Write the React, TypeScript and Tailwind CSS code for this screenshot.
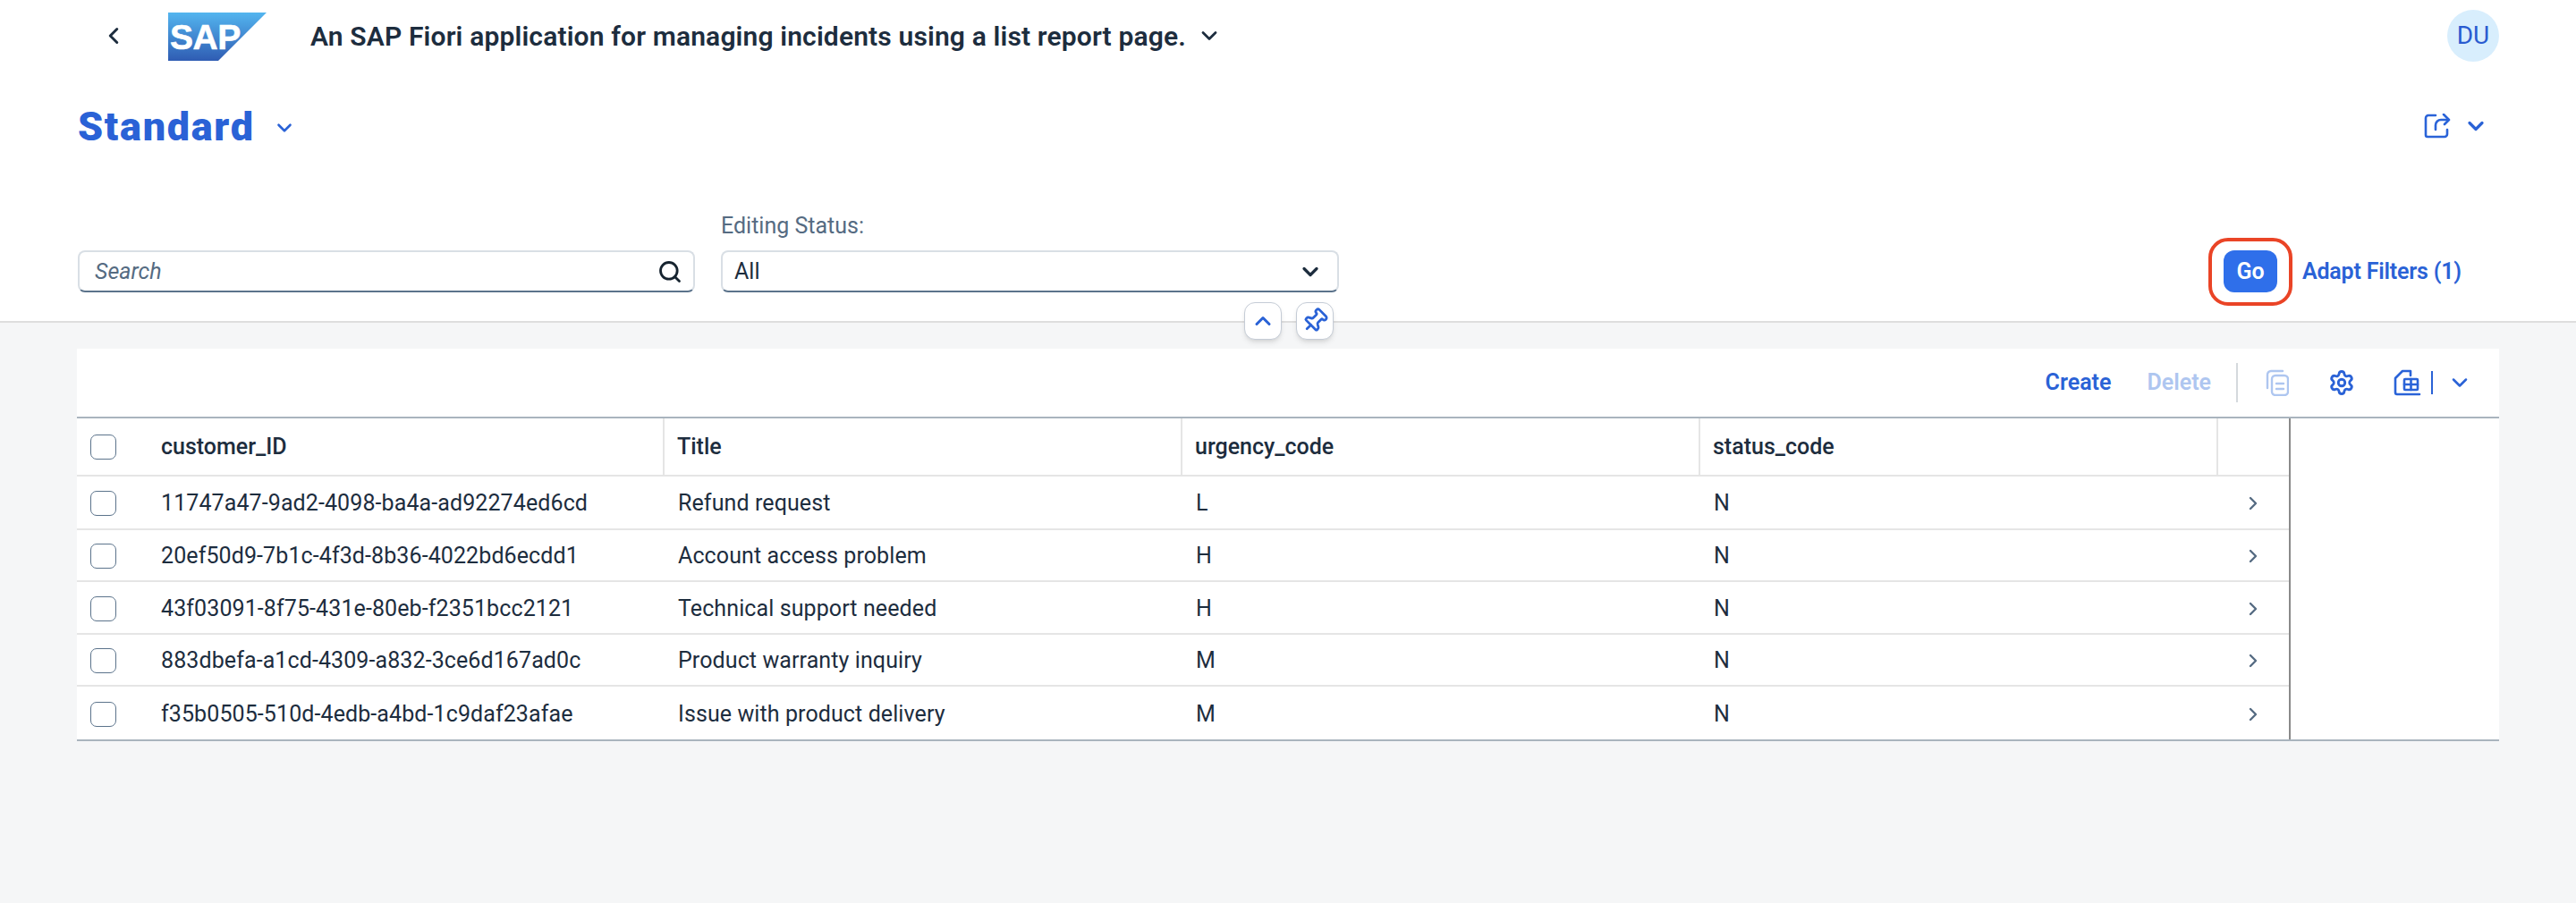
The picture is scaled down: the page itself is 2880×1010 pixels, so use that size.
import { Settings, Search, ChevronDown, ChevronLeft, ChevronRight, ChevronUp, Pin } from "lucide-react"

const FONT = "font-['Roboto',sans-serif]"

const rows = [
    { id: "11747a47-9ad2-4098-ba4a-ad92274ed6cd", title: "Refund request", urgency: "L", h: "h-[60px]" },
    { id: "20ef50d9-7b1c-4f3d-8b36-4022bd6ecdd1", title: "Account access problem", urgency: "H", h: "h-[58px]" },
    { id: "43f03091-8f75-431e-80eb-f2351bcc2121", title: "Technical support needed", urgency: "H", h: "h-[59px]" },
    { id: "883dbefa-a1cd-4309-a832-3ce6d167ad0c", title: "Product warranty inquiry", urgency: "M", h: "h-[58px]" },
    { id: "f35b0505-510d-4edb-a4bd-1c9daf23afae", title: "Issue with product delivery", urgency: "M", h: "h-[59px]" },
]

const SapLogo = () => (
    <svg width="110" height="54" viewBox="0 0 110 54">
        <defs>
            <linearGradient id="sapGrad" x1="0" y1="0" x2="0" y2="1">
                <stop offset="0" stopColor="#53b5ef" />
                <stop offset="1" stopColor="#2f5cb3" />
            </linearGradient>
        </defs>
        <polygon points="0,0 110,0 56,54 0,54" fill="url(#sapGrad)" />
        <text x="2" y="41" fontFamily="Liberation Sans" fontWeight="700" fontSize="39" letterSpacing="-0.5" fill="#fff" stroke="#fff" strokeWidth="0.6">SAP</text>
    </svg>
)

const ShareIcon = () => (
    <svg width="30" height="28" viewBox="0 0 30 28" fill="none" stroke="#2a63d8" strokeWidth="2.6" strokeLinecap="round" strokeLinejoin="round">
        <path d="M13 2H5a3 3 0 0 0-3 3v19a2 2 0 0 0 2 2h19a3 3 0 0 0 3-3v-5" />
        <path d="M13 18v-5a6 6 0 0 1 6-6h8" />
        <path d="M22 1l6 6-5 5" />
    </svg>
)

const CopyIcon = () => (
    <svg width="26" height="30" viewBox="0 0 26 30" fill="none" stroke="#aec6f0" strokeWidth="2.4" strokeLinecap="round" strokeLinejoin="round">
        <path d="M19 2H6a4 4 0 0 0-4 4v15" />
        <rect x="7" y="7" width="18" height="22" rx="4" />
        <path d="M12 16h8M12 22h8" />
    </svg>
)

const ExportIcon = () => (
    <svg width="32" height="30" viewBox="0 0 32 30" fill="none" stroke="#2a63d8" strokeWidth="2.6" strokeLinejoin="round" strokeLinecap="round">
        <path d="M19 7V2H10L2 10v16a2 2 0 0 0 2 2h25" />
        <rect x="12" y="11" width="15" height="12" rx="1" />
        <path d="M19.500 11v12M12 17h15" />
    </svg>
)

const Checkbox = () => (
    <div className="w-[29px] h-[28px] rounded-[7px] border border-[#5b738b] bg-white" />
)

const App = () => {
    return (
        <div className={`${FONT} w-[2880px] h-[1010px] bg-[#f5f6f7] overflow-hidden text-[#1d2d3e]`}>
            <div className="relative h-[361px] bg-white border-b-2 border-[#dedede]">
                <div className="flex items-center h-[80px] pl-[112px] pr-[86px]">
                    <ChevronLeft size={30} strokeWidth={2.4} color="#1d2d3e" />
                    <div className="ml-[46px] mt-[1px]"><SapLogo /></div>
                    <div className="ml-[49px] text-[30px] font-semibold tracking-[0.15px] whitespace-nowrap">An SAP Fiori application for managing incidents using a list report page.</div>
                    <ChevronDown size={28} strokeWidth={2.4} className="ml-[12px]" />
                    <div className="ml-auto w-[58px] h-[58px] rounded-full bg-[#d8eefd] text-[#2a5bd0] text-[28px] flex items-center justify-center">DU</div>
                </div>
                <div className="flex items-center h-[78px] mt-[22px] pl-[87px] pr-[98px]">
                    <div className="text-[45px] font-black tracking-[1.7px] text-[#2a62d6] leading-none">Standard</div>
                    <ChevronDown size={26} strokeWidth={2.4} color="#2a62d6" className="ml-[20px] mt-[4px]" />
                    <div className="ml-auto flex items-center gap-[14px]">
                        <ShareIcon />
                        <ChevronDown size={28} strokeWidth={2.8} color="#2a62d6" />
                    </div>
                </div>
                <div className="flex items-end pl-[87px] pr-[86px] mt-[56px]">
                    <div className="w-[690px] h-[47px] rounded-[8px] border-2 border-[#d9dfe5] border-b-[#5b738b] flex items-center pl-[17px] pr-[12px]">
                        <span className="italic text-[25px] text-[#556b82]">Search</span>
                        <Search size={28} strokeWidth={2.4} className="ml-auto text-[#16232f]" />
                    </div>
                    <div className="ml-[29px] w-[691px]">
                        <div className="text-[25px] text-[#556b82] leading-[34px] mb-[10px]">Editing Status:</div>
                        <div className="h-[47px] rounded-[8px] border-2 border-[#d9dfe5] border-b-[#5b738b] flex items-center pl-[13px] pr-[16px]">
                            <span className="text-[25px]">All</span>
                            <ChevronDown size={28} strokeWidth={2.8} className="ml-auto" />
                        </div>
                    </div>
                    <div className="ml-auto flex items-center">
                        <div className="relative w-[60px] h-[47px] rounded-[12px] bg-[#2f6fea] text-white text-[25px] font-semibold flex items-center justify-center">
                            Go
                            <div className="absolute -left-[17px] -top-[14px] w-[94px] h-[76px] rounded-[22px] border-4 border-[#ea4426]" />
                        </div>
                        <div className="ml-[28px] mr-[44px] w-[176px] text-[25px] font-semibold tracking-[-0.2px] text-[#2a62d6] whitespace-nowrap">Adapt Filters (1)</div>
                    </div>
                </div>
                <div className="absolute left-[1391px] top-[338px] flex gap-[16px]">
                    <div className="w-[42px] h-[42px] rounded-[12px] bg-white border border-[#c5ccd6] shadow-md flex items-center justify-center">
                        <ChevronUp size={28} strokeWidth={2.6} color="#2a62d6" />
                    </div>
                    <div className="w-[42px] h-[42px] rounded-[12px] bg-white border border-[#c5ccd6] shadow-md flex items-center justify-center">
                        <Pin size={30} strokeWidth={2.2} color="#2a62d6" className="rotate-45" />
                    </div>
                </div>
            </div>

            <div className="ml-[86px] mt-[29px] w-[2708px] bg-white border-b-2 border-[#a9b4be]">
                <div className="flex items-center justify-end h-[78px] border-b-2 border-[#a9b4be] pr-[30px]">
                    <span className="text-[25px] font-semibold text-[#2a62d6]">Create</span>
                    <span className="ml-[40px] text-[25px] font-semibold text-[#aec6f0]">Delete</span>
                    <div className="ml-[28px] w-[2px] h-[44px] bg-[#d5d9dd]" />
                    <div className="ml-[31px]"><CopyIcon /></div>
                    <Settings size={30} strokeWidth={2.3} color="#2a62d6" className="ml-[44px]" />
                    <div className="ml-[43px]"><ExportIcon /></div>
                    <div className="ml-[10px] w-[2px] h-[26px] bg-[#2a62d6]" />
                    <ChevronDown size={28} strokeWidth={2.2} color="#2a62d6" className="ml-[16px]" />
                </div>
                <div className="w-[2475px] border-r-2 border-[#8a8a8a]">
                    <div className="flex h-[65px] border-b-2 border-[#e5e5e5] text-[25px] font-medium">
                        <div className="w-[657px] flex items-center pl-[15px] border-r-2 border-[#e5e5e5]">
                            <Checkbox />
                            <span className="ml-[50px]">customer_ID</span>
                        </div>
                        <div className="w-[579px] flex items-center pl-[14px] border-r-2 border-[#e5e5e5]">Title</div>
                        <div className="w-[579px] flex items-center pl-[14px] border-r-2 border-[#e5e5e5]">urgency_code</div>
                        <div className="w-[579px] flex items-center pl-[14px] border-r-2 border-[#e5e5e5]">status_code</div>
                    </div>
                    {rows.map((row, i) => (
                        <div key={row.id} className={`flex ${row.h} pt-[2px] text-[25px] tracking-[0.1px] ${i < rows.length - 1 ? "border-b-2 border-[#e5e5e5]" : ""}`}>
                            <div className="w-[657px] flex items-center pl-[15px]">
                                <Checkbox />
                                <span className="ml-[50px]">{row.id}</span>
                            </div>
                            <div className="w-[579px] flex items-center pl-[15px]">{row.title}</div>
                            <div className="w-[579px] flex items-center pl-[15px]">{row.urgency}</div>
                            <div className="w-[579px] flex items-center pl-[15px]">N</div>
                            <div className="flex-1 flex items-center justify-end pr-[28px]">
                                <ChevronRight size={24} strokeWidth={2.4} color="#556b82" />
                            </div>
                        </div>
                    ))}
                </div>
            </div>
        </div>
    )
}

export default App
